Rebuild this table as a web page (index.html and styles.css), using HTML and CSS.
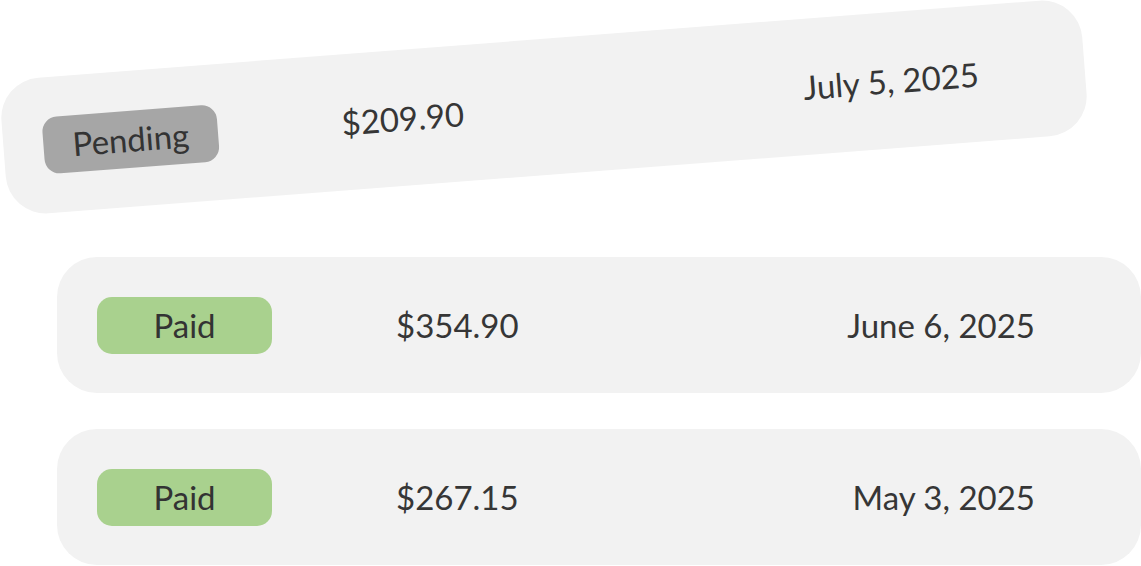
FILE: index.html
```html
<!DOCTYPE html>
<html>
<head>
<meta charset="utf-8">
<link rel="stylesheet" href="styles.css">
</head>
<body>
<div class="list">
  <div class="row row-tilted">
    <span class="badge badge-pending">Pending</span>
    <span class="amount">$209.90</span>
    <span class="date">July 5, 2025</span>
  </div>
  <div class="row">
    <span class="badge badge-paid">Paid</span>
    <span class="amount">$354.90</span>
    <span class="date">June 6, 2025</span>
  </div>
  <div class="row">
    <span class="badge badge-paid">Paid</span>
    <span class="amount">$267.15</span>
    <span class="date">May 3, 2025</span>
  </div>
</div>
</body>
</html>
```
FILE: styles.css
```css
html, body {
  margin: 0;
  padding: 0;
  background: #ffffff;
  overflow: hidden;
}
body {
  width: 1141px;
  height: 566px;
  font-family: Lato, "Open Sans", sans-serif;
  color: #363636;
}
.list {
  display: flex;
  flex-direction: column;
  gap: 36px;
  padding: 85px 0 0 57px;
}
.row {
  width: 1084px;
  height: 136px;
  box-sizing: border-box;
  background: #f2f2f2;
  border-radius: 40px;
  display: grid;
  grid-template-columns: 299px 1fr auto;
  align-items: center;
  padding: 0 106px 0 40px;
  font-size: 33px;
}
.row-tilted {
  transform: translate(-55px, -46px) rotate(-4.4deg);
}
.badge {
  width: 175px;
  height: 57px;
  border-radius: 15px;
  display: flex;
  align-items: center;
  justify-content: center;
  color: #333333;
}
.badge-paid {
  background: #a9d18e;
}
.badge-pending {
  background: #a6a6a6;
}
.amount {
  justify-self: start;
}
.date {
  justify-self: end;
}
```
